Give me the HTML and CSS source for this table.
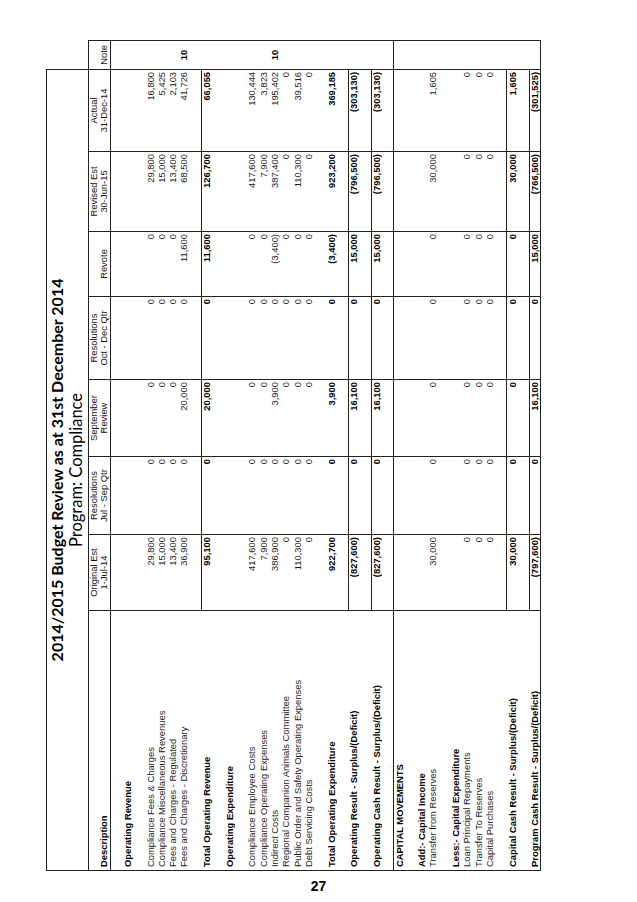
FILE: index.html
```html
<!DOCTYPE html>
<html>
<head>
<meta charset="utf-8">
<title>2014/2015 Budget Review - Compliance</title>
<link rel="stylesheet" href="styles.css">
</head>
<body>
<div class="frame">
  <div class="sheet">
    <table class="budget">
      <colgroup>
        <col class="c-desc"><col class="c-orig"><col class="c-rjul"><col class="c-sept"><col class="c-roct"><col class="c-rev"><col class="c-rest"><col class="c-act"><col class="c-note">
      </colgroup>
      <tr class="title-row">
        <td colspan="8" class="title-cell"><div class="t1">2014/2015 Budget Review as at 31st December 2014</div><div class="t2">Program: Compliance</div></td>
        <td class="title-gap"></td>
      </tr>
      <tr class="head-row">
        <th class="desc">Description</th>
        <th>Original Est<br>1-Jul-14</th>
        <th>Resolutions<br>Jul - Sep Qtr</th>
        <th>September<br>Review</th>
        <th>Resolutions<br>Oct - Dec Qtr</th>
        <th>Revote</th>
        <th>Revised Est<br>30-Jun-15</th>
        <th>Actual<br>31-Dec-14</th>
        <th>Note</th>
      </tr>
      <tr class="r"><td class="d"></td><td class="n"></td><td class="n"></td><td class="n"></td><td class="n"></td><td class="n"></td><td class="n"></td><td class="n"></td><td class="nt"></td></tr>
      <tr class="r b"><td class="d">Operating Revenue</td><td class="n"></td><td class="n"></td><td class="n"></td><td class="n"></td><td class="n"></td><td class="n"></td><td class="n"></td><td class="nt"></td></tr>
      <tr class="r"><td class="d"></td><td class="n"></td><td class="n"></td><td class="n"></td><td class="n"></td><td class="n"></td><td class="n"></td><td class="n"></td><td class="nt"></td></tr>
      <tr class="r"><td class="d">Compliance Fees &amp; Charges</td><td class="n">29,800</td><td class="n">0</td><td class="n">0</td><td class="n">0</td><td class="n">0</td><td class="n">29,800</td><td class="n">16,800</td><td class="nt"></td></tr>
      <tr class="r"><td class="d">Compliance Miscellaneous Revenues</td><td class="n">15,000</td><td class="n">0</td><td class="n">0</td><td class="n">0</td><td class="n">0</td><td class="n">15,000</td><td class="n">5,425</td><td class="nt"></td></tr>
      <tr class="r"><td class="d">Fees and Charges - Regulated</td><td class="n">13,400</td><td class="n">0</td><td class="n">0</td><td class="n">0</td><td class="n">0</td><td class="n">13,400</td><td class="n">2,103</td><td class="nt"></td></tr>
      <tr class="r"><td class="d">Fees and Charges - Discretionary</td><td class="n">36,900</td><td class="n">0</td><td class="n">20,000</td><td class="n">0</td><td class="n">11,600</td><td class="n">68,500</td><td class="n">41,726</td><td class="nt">10</td></tr>
      <tr class="r"><td class="d"></td><td class="n"></td><td class="n"></td><td class="n"></td><td class="n"></td><td class="n"></td><td class="n"></td><td class="n"></td><td class="nt"></td></tr>
      <tr class="r b rule"><td class="d">Total Operating Revenue</td><td class="n">95,100</td><td class="n">0</td><td class="n">20,000</td><td class="n">0</td><td class="n">11,600</td><td class="n">126,700</td><td class="n">66,055</td><td class="nt"></td></tr>
      <tr class="r"><td class="d"></td><td class="n"></td><td class="n"></td><td class="n"></td><td class="n"></td><td class="n"></td><td class="n"></td><td class="n"></td><td class="nt"></td></tr>
      <tr class="r b"><td class="d">Operating Expenditure</td><td class="n"></td><td class="n"></td><td class="n"></td><td class="n"></td><td class="n"></td><td class="n"></td><td class="n"></td><td class="nt"></td></tr>
      <tr class="r"><td class="d"></td><td class="n"></td><td class="n"></td><td class="n"></td><td class="n"></td><td class="n"></td><td class="n"></td><td class="n"></td><td class="nt"></td></tr>
      <tr class="r"><td class="d">Compliance Employee Costs</td><td class="n">417,600</td><td class="n">0</td><td class="n">0</td><td class="n">0</td><td class="n">0</td><td class="n">417,600</td><td class="n">130,444</td><td class="nt"></td></tr>
      <tr class="r"><td class="d">Compliance Operating Expenses</td><td class="n">7,900</td><td class="n">0</td><td class="n">0</td><td class="n">0</td><td class="n">0</td><td class="n">7,900</td><td class="n">3,823</td><td class="nt"></td></tr>
      <tr class="r"><td class="d">Indirect Costs</td><td class="n">386,900</td><td class="n">0</td><td class="n">3,900</td><td class="n">0</td><td class="n">(3,400)</td><td class="n">387,400</td><td class="n">195,402</td><td class="nt">10</td></tr>
      <tr class="r"><td class="d">Regional Companion Animals Committee</td><td class="n">0</td><td class="n">0</td><td class="n">0</td><td class="n">0</td><td class="n">0</td><td class="n">0</td><td class="n">0</td><td class="nt"></td></tr>
      <tr class="r"><td class="d">Public Order and Safety Operating Expenses</td><td class="n">110,300</td><td class="n">0</td><td class="n">0</td><td class="n">0</td><td class="n">0</td><td class="n">110,300</td><td class="n">39,516</td><td class="nt"></td></tr>
      <tr class="r"><td class="d">Debt Servicing Costs</td><td class="n">0</td><td class="n">0</td><td class="n">0</td><td class="n">0</td><td class="n">0</td><td class="n">0</td><td class="n">0</td><td class="nt"></td></tr>
      <tr class="r"><td class="d"></td><td class="n"></td><td class="n"></td><td class="n"></td><td class="n"></td><td class="n"></td><td class="n"></td><td class="n"></td><td class="nt"></td></tr>
      <tr class="r b"><td class="d">Total Operating Expenditure</td><td class="n">922,700</td><td class="n">0</td><td class="n">3,900</td><td class="n">0</td><td class="n">(3,400)</td><td class="n">923,200</td><td class="n">369,185</td><td class="nt"></td></tr>
      <tr class="r"><td class="d"></td><td class="n"></td><td class="n"></td><td class="n"></td><td class="n"></td><td class="n"></td><td class="n"></td><td class="n"></td><td class="nt"></td></tr>
      <tr class="r b rule"><td class="d">Operating Result - Surplus/(Deficit)</td><td class="n">(827,600)</td><td class="n">0</td><td class="n">16,100</td><td class="n">0</td><td class="n">15,000</td><td class="n">(796,500)</td><td class="n">(303,130)</td><td class="nt"></td></tr>
      <tr class="r"><td class="d"></td><td class="n"></td><td class="n"></td><td class="n"></td><td class="n"></td><td class="n"></td><td class="n"></td><td class="n"></td><td class="nt"></td></tr>
      <tr class="r b rule"><td class="d">Operating Cash Result - Surplus/(Deficit)</td><td class="n">(827,600)</td><td class="n">0</td><td class="n">16,100</td><td class="n">0</td><td class="n">15,000</td><td class="n">(796,500)</td><td class="n">(303,130)</td><td class="nt"></td></tr>
      <tr class="r"><td class="d"></td><td class="n"></td><td class="n"></td><td class="n"></td><td class="n"></td><td class="n"></td><td class="n"></td><td class="n"></td><td class="nt"></td></tr>
      <tr class="r b sect"><td class="d">CAPITAL MOVEMENTS</td><td class="n"></td><td class="n"></td><td class="n"></td><td class="n"></td><td class="n"></td><td class="n"></td><td class="n"></td><td class="nt"></td></tr>
      <tr class="r"><td class="d"></td><td class="n"></td><td class="n"></td><td class="n"></td><td class="n"></td><td class="n"></td><td class="n"></td><td class="n"></td><td class="nt"></td></tr>
      <tr class="r b"><td class="d">Add:- Capital Income</td><td class="n"></td><td class="n"></td><td class="n"></td><td class="n"></td><td class="n"></td><td class="n"></td><td class="n"></td><td class="nt"></td></tr>
      <tr class="r"><td class="d">Transfer from Reserves</td><td class="n">30,000</td><td class="n">0</td><td class="n">0</td><td class="n">0</td><td class="n">0</td><td class="n">30,000</td><td class="n">1,605</td><td class="nt"></td></tr>
      <tr class="r"><td class="d"></td><td class="n"></td><td class="n"></td><td class="n"></td><td class="n"></td><td class="n"></td><td class="n"></td><td class="n"></td><td class="nt"></td></tr>
      <tr class="r b"><td class="d">Less:- Capital Expenditure</td><td class="n"></td><td class="n"></td><td class="n"></td><td class="n"></td><td class="n"></td><td class="n"></td><td class="n"></td><td class="nt"></td></tr>
      <tr class="r"><td class="d">Loan Principal Repayments</td><td class="n">0</td><td class="n">0</td><td class="n">0</td><td class="n">0</td><td class="n">0</td><td class="n">0</td><td class="n">0</td><td class="nt"></td></tr>
      <tr class="r"><td class="d">Transfer To Reserves</td><td class="n">0</td><td class="n">0</td><td class="n">0</td><td class="n">0</td><td class="n">0</td><td class="n">0</td><td class="n">0</td><td class="nt"></td></tr>
      <tr class="r"><td class="d">Capital Purchases</td><td class="n">0</td><td class="n">0</td><td class="n">0</td><td class="n">0</td><td class="n">0</td><td class="n">0</td><td class="n">0</td><td class="nt"></td></tr>
      <tr class="r"><td class="d"></td><td class="n"></td><td class="n"></td><td class="n"></td><td class="n"></td><td class="n"></td><td class="n"></td><td class="n"></td><td class="nt"></td></tr>
      <tr class="r b rule"><td class="d">Capital Cash Result - Surplus/(Deficit)</td><td class="n">30,000</td><td class="n">0</td><td class="n">0</td><td class="n">0</td><td class="n">0</td><td class="n">30,000</td><td class="n">1,605</td><td class="nt"></td></tr>
      <tr class="r"><td class="d"></td><td class="n"></td><td class="n"></td><td class="n"></td><td class="n"></td><td class="n"></td><td class="n"></td><td class="n"></td><td class="nt"></td></tr>
      <tr class="r b rule last"><td class="d">Program Cash Result - Surplus/(Deficit)</td><td class="n">(797,600)</td><td class="n">0</td><td class="n">16,100</td><td class="n">0</td><td class="n">15,000</td><td class="n">(766,500)</td><td class="n">(301,525)</td><td class="nt"></td></tr>
    </table>
  </div>
</div>
<div class="page-no">27</div>
</body>
</html>
```

FILE: styles.css
```css
html, body {
  margin: 0;
  padding: 0;
  background: #ffffff;
}

body {
  width: 637px;
  height: 902px;
  overflow: hidden;
  font-family: "Liberation Sans", Arial, sans-serif;
  color: #1c1c1c;
}

.frame {
  width: 637px;
  height: 871px;
  overflow: hidden;
}

.sheet {
  width: 871px;
  height: 637px;
  box-sizing: border-box;
  padding-top: 46px;
  transform-origin: 0 0;
  transform: translateY(871px) rotate(-90deg);
}

.budget {
  border-collapse: collapse;
  table-layout: fixed;
  width: 830px;
  font-size: 9.4px;
}

.c-desc { width: 260px; }
.c-orig { width: 76px; }
.c-rjul { width: 78px; }
.c-sept { width: 77px; }
.c-roct { width: 83px; }
.c-rev  { width: 65px; }
.c-rest { width: 80px; }
.c-act  { width: 82px; }
.c-note { width: 29px; }

.budget td,
.budget th {
  padding: 0;
  box-sizing: border-box;
  white-space: nowrap;
  overflow: hidden;
}

/* title */
.title-row td {
  height: 42px;
}

.title-cell {
  border: 1px solid #222;
  border-bottom: none;
  text-align: center;
  vertical-align: top;
  font-family: Lato, "Liberation Sans", sans-serif;
  color: #000;
  padding-top: 3px;
}

.title-gap {
  border: none;
}

.t1 {
  font-size: 16px;
  font-weight: bold;
  line-height: 20px;
}

.t2 {
  font-size: 16.5px;
  font-weight: normal;
  line-height: 19px;
}

/* header */
.head-row th {
  height: 22px;
  border: 1px solid #222;
  font-weight: normal;
  vertical-align: bottom;
  text-align: center;
  line-height: 10.2px;
  padding-bottom: 1px;
  color: #111;
}

.head-row th.desc {
  text-align: left;
  font-weight: bold;
  padding-left: 3px;
  color: #000;
}

/* body */
.r td {
  height: 11.32px;
  line-height: 10px;
  border-left: 1px solid #222;
  border-right: 1px solid #222;
  vertical-align: middle;
}

.r td.d {
  padding-left: 3px;
  text-align: left;
}

.r td.n {
  text-align: right;
  padding-right: 2px;
}

.r td.nt {
  text-align: center;
  font-weight: bold;
  color: #000;
}

.b td {
  font-weight: bold;
  color: #000;
}

.rule td.n {
  border-top: 1px solid #222;
}

.sect td {
  border-top: 1px solid #222;
}

.last td {
  border-bottom: 1px solid #222;
}

.page-no {
  text-align: center;
  font-size: 14px;
  font-weight: bold;
  line-height: 14px;
  padding-top: 8px;
  color: #000;
}
```
